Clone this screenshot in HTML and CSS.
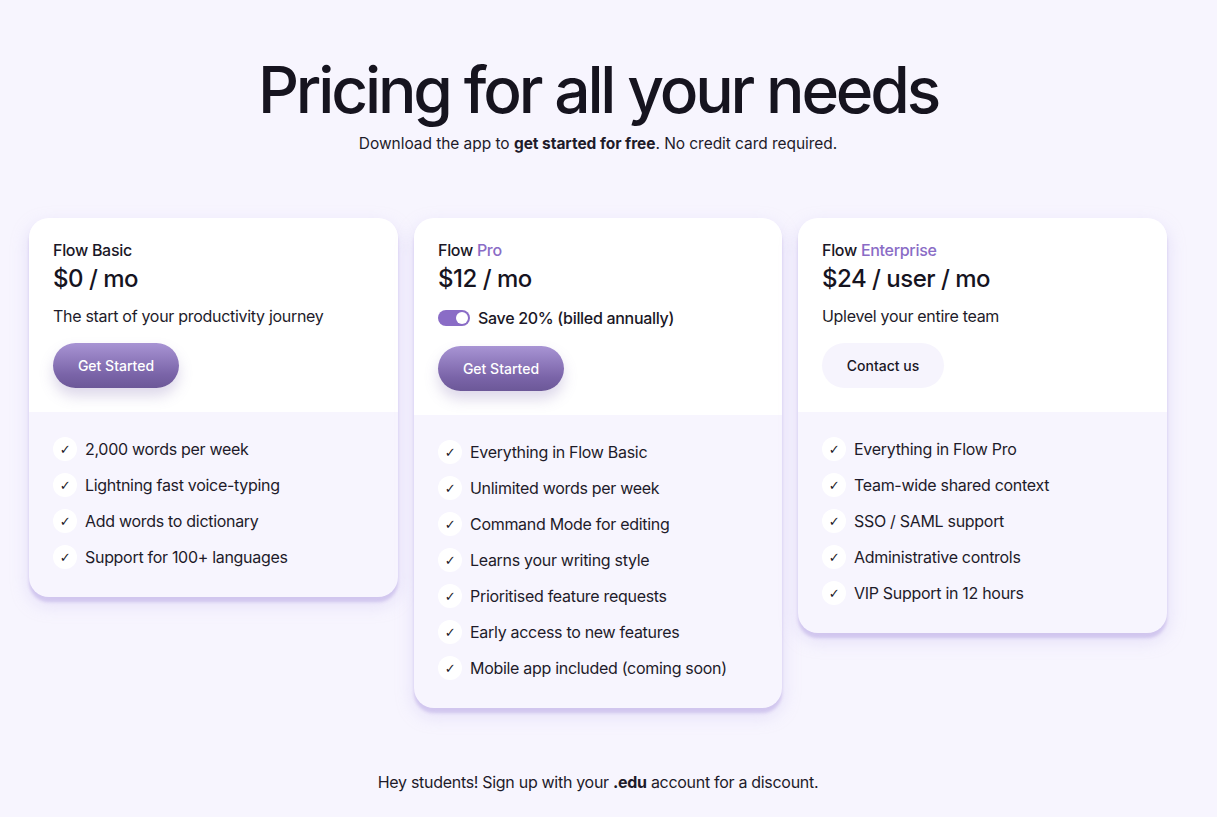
FILE: index.html
```html
<!DOCTYPE html>
<html lang="en">
<head>
<meta charset="utf-8">
<title>Pricing</title>
<link rel="stylesheet" href="styles.css">
</head>
<body>
<main class="page">
  <header class="hero">
    <h1 class="title">Pricing for all your needs</h1>
    <p class="subtitle">Download the app to <strong>get started for free</strong>. No credit card required.</p>
  </header>

  <section class="plans">
    <article class="card">
      <div class="card-top">
        <div class="plan-name">Flow Basic</div>
        <div class="price">$0 / mo</div>
        <p class="desc">The start of your productivity journey</p>
        <a class="btn btn-primary">Get Started</a>
      </div>
      <ul class="features">
        <li><span class="check">✓</span>2,000 words per week</li>
        <li><span class="check">✓</span>Lightning fast voice-typing</li>
        <li><span class="check">✓</span>Add words to dictionary</li>
        <li><span class="check">✓</span>Support for 100+ languages</li>
      </ul>
    </article>

    <article class="card">
      <div class="card-top">
        <div class="plan-name">Flow <span class="accent">Pro</span></div>
        <div class="price">$12 / mo</div>
        <div class="toggle-row"><span class="toggle"><span class="knob"></span></span><span class="toggle-label">Save 20% (billed annually)</span></div>
        <a class="btn btn-primary">Get Started</a>
      </div>
      <ul class="features">
        <li><span class="check">✓</span>Everything in Flow Basic</li>
        <li><span class="check">✓</span>Unlimited words per week</li>
        <li><span class="check">✓</span>Command Mode for editing</li>
        <li><span class="check">✓</span>Learns your writing style</li>
        <li><span class="check">✓</span>Prioritised feature requests</li>
        <li><span class="check">✓</span>Early access to new features</li>
        <li><span class="check">✓</span>Mobile app included (coming soon)</li>
      </ul>
    </article>

    <article class="card">
      <div class="card-top">
        <div class="plan-name">Flow <span class="accent">Enterprise</span></div>
        <div class="price">$24 / user / mo</div>
        <p class="desc">Uplevel your entire team</p>
        <a class="btn btn-light">Contact us</a>
      </div>
      <ul class="features">
        <li><span class="check">✓</span>Everything in Flow Pro</li>
        <li><span class="check">✓</span>Team-wide shared context</li>
        <li><span class="check">✓</span>SSO / SAML support</li>
        <li><span class="check">✓</span>Administrative controls</li>
        <li><span class="check">✓</span>VIP Support in 12 hours</li>
      </ul>
    </article>
  </section>

  <p class="footnote">Hey students! Sign up with your <strong>.edu</strong> account for a discount.</p>
</main>
</body>
</html>
```

FILE: styles.css
```css
* { box-sizing: border-box; }

html, body {
  margin: 0;
  padding: 0;
  background: #f7f5fe;
  color: #1a1726;
  font-family: Inter, "Noto Sans", "Liberation Sans", sans-serif;
}

.page {
  width: 1196px;
  min-height: 817px;
  padding: 52px 29px 0 29px;
  display: flex;
  flex-direction: column;
  align-items: center;
}

.hero {
  text-align: center;
}

.title {
  margin: 0;
  font-size: 64px;
  line-height: 76px;
  font-weight: 500;
  letter-spacing: -3.15px;
  color: #16141f;
}

.subtitle {
  margin: 5px 0 0 0;
  font-size: 15.5px;
  line-height: 22px;
  color: #1e1b2a;
  letter-spacing: -0.05px;
}

.subtitle strong { font-weight: 700; }

.plans {
  margin-top: 63px;
  width: 100%;
  display: grid;
  grid-template-columns: 369px 368px 369px;
  column-gap: 16px;
  justify-content: center;
  align-items: start;
}

.card {
  background: #f7f5fe;
  border-radius: 20px;
  overflow: hidden;
  box-shadow: 0 5px 3px rgba(200, 186, 234, 0.7), 0 7px 18px rgba(190, 175, 235, 0.35);
}

.card-top {
  background: #ffffff;
  padding: 22px 24px 24px 24px;
  display: flex;
  flex-direction: column;
  align-items: flex-start;
}

.plan-name {
  font-size: 16px;
  line-height: 20px;
  font-weight: 500;
  color: #1a1726;
  letter-spacing: -0.3px;
}

.accent { color: #8a6cc6; }

.price {
  margin-top: 4px;
  font-size: 24px;
  line-height: 30px;
  font-weight: 500;
  letter-spacing: -0.5px;
  color: #16141f;
}

.desc {
  margin: 12px 0 0 0;
  font-size: 16px;
  line-height: 20px;
  color: #1e1b2a;
  letter-spacing: -0.3px;
}

.toggle-row {
  margin-top: 14px;
  display: flex;
  align-items: center;
  gap: 8px;
}

.toggle-row + .btn { margin-top: 18px; }

.toggle {
  width: 32px;
  height: 16px;
  border-radius: 8px;
  background: #8a6cc6;
  display: flex;
  align-items: center;
  justify-content: flex-end;
  padding: 2px;
}

.knob {
  width: 12px;
  height: 12px;
  border-radius: 50%;
  background: #ffffff;
}

.toggle-label {
  font-size: 16px;
  line-height: 20px;
  font-weight: 500;
  color: #1a1726;
  letter-spacing: -0.3px;
}

.btn {
  margin-top: 17px;
  height: 45px;
  border-radius: 23px;
  display: inline-flex;
  align-items: center;
  justify-content: center;
  font-size: 14px;
  font-weight: 500;
  cursor: pointer;
}

.btn-primary {
  width: 126px;
  color: #ffffff;
  background: linear-gradient(180deg, #a894d4 0%, #7a64a8 70%, #6c5898 100%);
  box-shadow: 0 8px 14px rgba(120, 100, 170, 0.25);
}

.btn-light {
  width: 122px;
  color: #1a1726;
  background: #f6f4fd;
}

.features {
  list-style: none;
  margin: 0;
  padding: 25px 24px 28px 24px;
  display: flex;
  flex-direction: column;
  gap: 12px;
}

.features li {
  display: flex;
  align-items: center;
  gap: 8px;
  height: 24px;
  font-size: 16px;
  color: #1e1b2a;
  letter-spacing: -0.3px;
}

.check {
  width: 24px;
  height: 24px;
  border-radius: 50%;
  background: #ffffff;
  display: inline-flex;
  align-items: center;
  justify-content: center;
  font-size: 13px;
  font-family: "DejaVu Sans", sans-serif;
  color: #1a1726;
  flex: none;
}

.footnote {
  margin: 63px 0 0 0;
  font-size: 16px;
  line-height: 22px;
  color: #1e1b2a;
  letter-spacing: -0.3px;
}

.footnote strong { font-weight: 700; }
```
